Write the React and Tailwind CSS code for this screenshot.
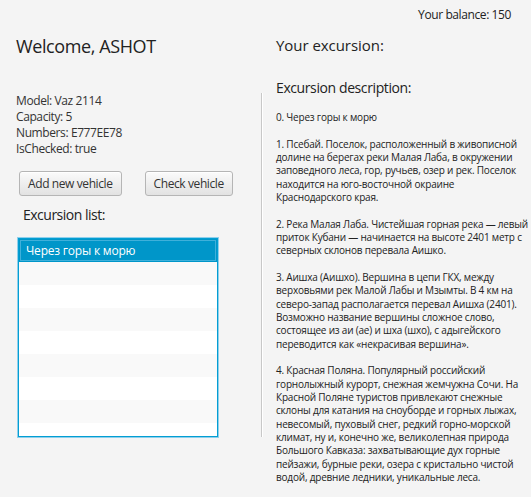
import React from "react";

const desc = [
  "0. Через горы к морю",
  "",
  "1. Псебай. Поселок, расположенный в живописной",
  "долине на берегах реки Малая Лаба, в окружении",
  "заповедного леса, гор, ручьев, озер и рек. Поселок",
  "находится на юго-восточной окраине",
  "Краснодарского края.",
  "",
  "2. Река Малая Лаба. Чистейшая горная река — левый",
  "приток Кубани — начинается на высоте 2401 метр с",
  "северных склонов перевала Аишко.",
  "",
  "3. Аишха (Аишхо). Вершина в цепи ГКХ, между",
  "верховьями рек Малой Лабы и Мзымты. В 4 км на",
  "северо-запад располагается перевал Аишха (2401).",
  "Возможно название вершины сложное слово,",
  "состоящее из аи (ае) и шха (шхо), с адыгейского",
  "переводится как «некрасивая вершина».",
  "",
  "4. Красная Поляна. Популярный российский",
  "горнолыжный курорт, снежная жемчужна Сочи. На",
  "Красной Поляне туристов привлекают снежные",
  "склоны для катания на сноуборде и горных лыжах,",
  "невесомый, пуховый снег, редкий горно-морской",
  "климат, ну и, конечно же, великолепная природа",
  "Большого Кавказа: захватывающие дух горные",
  "пейзажи, бурные реки, озера с кристально чистой",
  "водой, древние ледники, уникальные леса.",
];

function Btn({ children }) {
  return (
    <button className="h-[25px] px-[8px] rounded-[3px] border border-[#b5b5b5] bg-gradient-to-b from-[#fbfbfb] to-[#e2e2e2] shadow-[inset_0_1px_0_#ffffff] text-[12px] leading-[16px] tracking-[-0.4px] text-[#333333]">
      {children}
    </button>
  );
}

export default function App() {
  const rows = [0, 1, 2, 3, 4, 5, 6, 7, 8];
  return (
    <div className="w-[531px] h-[497px] overflow-hidden bg-[#f4f4f4] font-['Open_Sans',sans-serif] text-[#333333] flex">
      <div className="w-[261px] shrink-0 pl-[16px] flex flex-col">
        <div className="mt-[32px] text-[18px] leading-[28px] tracking-[-0.4px] text-[#222222]">Welcome, ASHOT</div>
        <div className="mt-[33px] text-[12px] leading-[16px] tracking-[-0.4px]">
          <div>Model: Vaz 2114</div>
          <div>Capacity: 5</div>
          <div>Numbers: E777EE78</div>
          <div>IsChecked: true</div>
        </div>
        <div className="mt-[14px] ml-[3px] flex gap-[23px]">
          <Btn>Add new vehicle</Btn>
          <Btn>Check vehicle</Btn>
        </div>
        <div className="mt-[9px] ml-[7px] text-[14px] leading-[20px] tracking-[-0.5px] text-[#222222]">Excursion list:</div>
        <div className="mt-[12px] ml-[1px] w-[202px] h-[201px] border border-[#8fd0ec] bg-white">
          <div className="h-full border border-[#039ed3] overflow-hidden">
            {rows.map((i) => (
              <div
                key={i}
                className={
                  i === 0
                    ? "h-[23px] pl-[7px] flex items-center bg-[#0096c9] text-white text-[12px] shadow-[inset_0_0_0_1px_#0096c9,inset_0_0_0_2px_#3fb0da]"
                    : i % 2 === 1
                    ? "h-[23px] bg-[#f9f9f9]"
                    : "h-[23px] bg-white"
                }
              >
                {i === 0 ? <span className="tracking-[-0.2px]">Через горы к морю</span> : null}
              </div>
            ))}
          </div>
        </div>
      </div>
      <div className="shrink-0 self-start mt-[93px] h-[344px] w-[2px] border-l border-[#c8c8c8] border-r border-r-white" />
      <div className="flex-1 min-w-0 pl-[13px] flex flex-col">
        <div className="pt-[7px] pr-[20px] text-right text-[12px] leading-[16px] tracking-[-0.4px] text-[#222222]">Your balance: 150</div>
        <div className="mt-[11px] text-[15px] leading-[22px] tracking-[-0.05px] text-[#222222]">Your excursion:</div>
        <div className="mt-[21px] text-[14px] leading-[22px] tracking-[-0.4px] text-[#222222]">Excursion description:</div>
        <div className="mt-[12px] text-[10px] leading-[13.33px] tracking-[-0.2px] whitespace-nowrap text-[#222222]">
          {desc.map((l, i) => (
            <div key={i} className="h-[13.33px]">{l}</div>
          ))}
        </div>
      </div>
    </div>
  );
}
